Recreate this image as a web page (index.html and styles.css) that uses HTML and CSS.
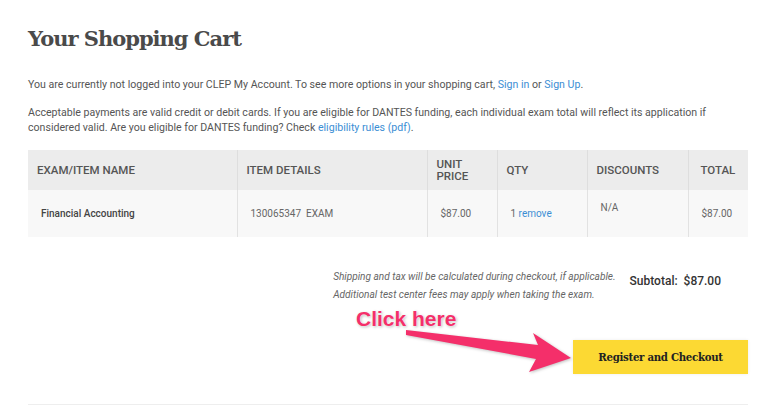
FILE: index.html
```html
<!DOCTYPE html>
<html lang="en">
<head>
    <meta charset="UTF-8">
    <meta name="viewport" content="width=device-width, initial-scale=1.0">
    <title>Your Shopping Cart</title>
    <link rel="stylesheet" href="styles.css">
</head>
<body>
    <div class="page">
        <h1>Your Shopping Cart</h1>

        <p class="intro">You are currently not logged into your CLEP My Account. To see more options in your shopping cart, <a href="#">Sign in</a> or <a href="#">Sign Up</a>.</p>
        <p class="intro">Acceptable payments are valid credit or debit cards. If you are eligible for DANTES funding, each individual exam total will reflect its application if considered valid. Are you eligible for DANTES funding? Check <a href="#">eligibility rules (pdf)</a>.</p>

        <table class="cart">
            <thead>
                <tr>
                    <th class="col-name">EXAM/ITEM NAME</th>
                    <th class="col-details">ITEM DETAILS</th>
                    <th class="col-price">UNIT<br>PRICE</th>
                    <th class="col-qty">QTY</th>
                    <th class="col-disc">DISCOUNTS</th>
                    <th class="col-total">TOTAL</th>
                </tr>
            </thead>
            <tbody>
                <tr>
                    <td class="item-name">Financial Accounting</td>
                    <td>130065347&nbsp;&nbsp;EXAM</td>
                    <td>$87.00</td>
                    <td>1 <a href="#">remove</a></td>
                    <td class="top">N/A</td>
                    <td>$87.00</td>
                </tr>
            </tbody>
        </table>

        <div class="summary">
            <div class="notes">
                <p>Shipping and tax will be calculated during checkout, if applicable.</p>
                <p>Additional test center fees may apply when taking the exam.</p>
            </div>
            <div class="subtotal">Subtotal:&nbsp;&nbsp;$87.00</div>
        </div>

        <div class="actions">
            <div class="hint">Click here</div>
            <svg class="arrow" width="180" height="50" viewBox="0 0 180 50">
                <polygon points="0,1 132,16 127,4 165,29 123,43 130,30 0,6" fill="#f42f6a"/>
            </svg>
            <button class="checkout">Register and Checkout</button>
        </div>

        <div class="rule"></div>
    </div>
</body>
</html>
```

FILE: styles.css
```css
body {
    margin: 0;
    padding: 0;
    background-color: #fff;
    font-family: Roboto, "Liberation Sans", Arial, sans-serif;
    color: #555;
}

a {
    color: #3b8ed4;
    text-decoration: none;
}

.page {
    width: 720px;
    padding: 0 20px 0 28px;
}

h1 {
    font-family: "DejaVu Serif", Georgia, serif;
    font-size: 21px;
    font-weight: bold;
    color: #4a4a4a;
    margin: 0;
    padding-top: 24px;
    line-height: 30px;
    letter-spacing: -1px;
}

.intro {
    font-size: 10.6px;
    line-height: 15px;
    margin: 0;
}

h1 + .intro {
    margin-top: 23px;
}

.intro + .intro {
    margin-top: 13px;
}

.cart {
    width: 720px;
    margin-top: 15px;
    border-collapse: collapse;
    table-layout: fixed;
}

.cart th,
.cart td {
    box-sizing: border-box;
}

.cart th {
    background-color: #ececec;
    height: 40px;
    padding: 0 9px;
    text-align: left;
    font-size: 11.5px;
    font-weight: 500;
    line-height: 12px;
    color: #555;
    border-left: 1px solid #dedede;
}

.cart td {
    background-color: #f8f8f8;
    height: 47px;
    padding: 0 13px;
    font-size: 10px;
    color: #666;
    border-left: 1px solid #e2e2e2;
}

.cart th:first-child,
.cart td:first-child {
    border-left: none;
}

.cart td.top {
    vertical-align: top;
    padding-top: 12px;
}

.cart .item-name {
    font-weight: 500;
    color: #444;
}

.cart .col-name { width: 209px; }
.cart .col-details { width: 190px; }
.cart .col-price { width: 70px; }
.cart .col-qty { width: 90px; }
.cart .col-disc { width: 101px; }
.cart .col-total { width: 60px; }

.cart th.col-total {
    padding-left: 12px;
}

.summary {
    display: flex;
    justify-content: flex-end;
    align-items: flex-start;
    margin-top: 31px;
    padding-right: 27px;
}

.notes p {
    margin: 0;
    font-size: 10.1px;
    font-style: italic;
    line-height: 18px;
    color: #666;
}

.subtotal {
    margin-left: 14px;
    padding-top: 6px;
    font-size: 12px;
    font-weight: 500;
    line-height: 15px;
    color: #333;
}

.actions {
    position: relative;
    display: flex;
    justify-content: flex-end;
    margin-top: 36px;
    height: 62px;
}

.checkout {
    width: 175px;
    height: 34px;
    background-color: #fcd933;
    border: none;
    font-family: "DejaVu Serif", Georgia, serif;
    font-size: 10.2px;
    font-weight: bold;
    color: #222;
    letter-spacing: -0.3px;
    box-shadow: 0 0 3px rgba(0, 0, 0, 0.08);
}

.hint {
    position: absolute;
    left: 328px;
    top: -33px;
    font-family: "Liberation Sans", Arial, sans-serif;
    font-size: 21px;
    font-weight: bold;
    color: #f42f6a;
    text-shadow: 0 0 2px #fff, 1px 1px 3px rgba(0, 0, 0, 0.3);
}

.arrow {
    position: absolute;
    left: 378px;
    top: -11px;
    filter: drop-shadow(1px 1px 1.5px rgba(0, 0, 0, 0.25));
}

.rule {
    height: 1px;
    background-color: #eee;
    margin-top: 2px;
}
```
